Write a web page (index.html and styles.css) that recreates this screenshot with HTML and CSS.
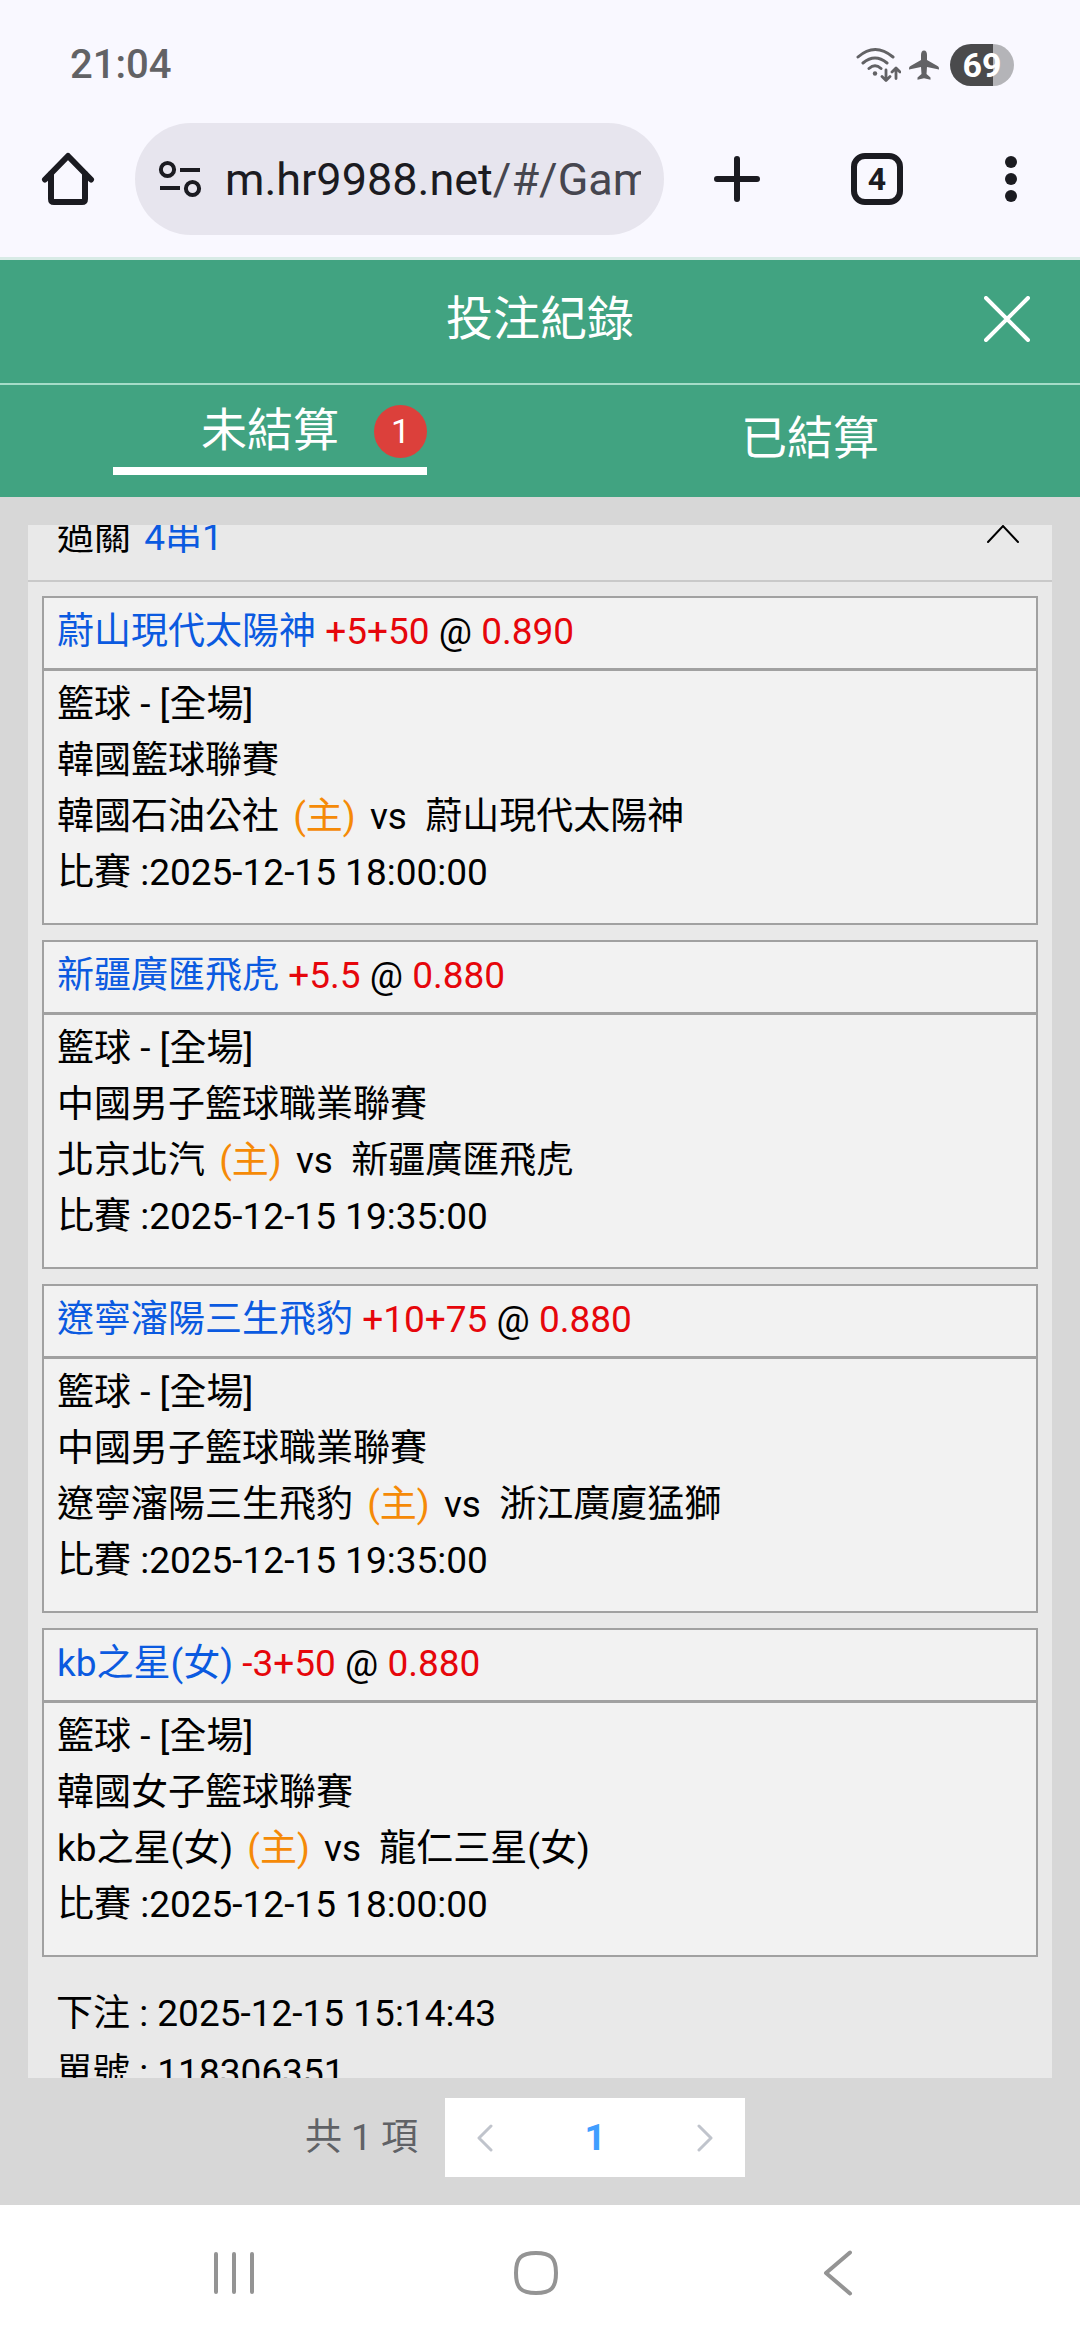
FILE: index.html
```html
<!DOCTYPE html>
<html lang="zh-Hant">
<head>
<meta charset="utf-8">
<meta name="viewport" content="width=device-width, initial-scale=1">
<title>投注紀錄</title>
<link rel="stylesheet" href="styles.css">
</head>
<body>
<div class="screen">
  <div class="browser">
    <div class="status">
      <span class="clock">21:04</span>
      <div class="status-icons">
        <svg class="wifi" width="46" height="36" viewBox="0 0 46 36" fill="none" stroke="#626265" stroke-width="3" stroke-linecap="round" stroke-linejoin="round">
          <path d="M3 10Q20 -5 38 10M8 16Q20 6 32 16M14 21.500Q20 16 26 21.500"/>
          <circle cx="20" cy="26.500" r="2.200" fill="#626265" stroke="none"/>
          <path d="M31 23v10M27 29.500l4 4 4-4M41 31.500v-10M37 25l4-4 4 4" stroke-width="2.800"/>
        </svg>
        <svg class="plane" width="30" height="30" viewBox="0 0 30 30" fill="#626265">
          <path d="M15 0.500c2 0 3 1.800 3 4.500v5l10.500 6c1 .6 1.500 1.200 1.500 3.500l-12-2.500-.5 7 4 3.500v2.200L15 28.300 8.500 29.700v-2.200l4-3.500-.5-7L0 19.500c0-2.300.5-2.900 1.500-3.500l10.500-6V5c0-2.700 1-4.500 3-4.500z"/>
        </svg>
        <span class="battery">69</span>
      </div>
    </div>
    <div class="toolbar">
      <button class="tool home" type="button" aria-label="Home">
        <svg width="54" height="54" viewBox="0 0 54 54" fill="none" stroke="#1b1b21" stroke-width="6" stroke-linecap="round" stroke-linejoin="round"><path d="M4 27.500L27 4l23 23.500"/><path d="M10 22v25q0 3 3 3h28q3 0 3-3V22"/></svg>
      </button>
      <button class="address" type="button">
        <svg class="tune" width="44" height="38" viewBox="0 0 44 38" fill="none" stroke="#1b1b21" stroke-width="4" stroke-linecap="butt"><circle cx="9.500" cy="9.500" r="6.600"/><path d="M22 10h20M2 28h20"/><circle cx="34.500" cy="28.500" r="6.600"/></svg>
        <span class="url">m.hr9988.net<span class="path">/#/Gam</span></span>
      </button>
      <button class="tool add" type="button" aria-label="New tab">
        <svg width="46" height="48" viewBox="0 0 46 48" fill="none" stroke="#1b1b21" stroke-width="6" stroke-linecap="round"><path d="M23 4v40M3 24h40"/></svg>
      </button>
      <button class="tool" type="button" aria-label="Tabs"><span class="tab-count">4</span></button>
      <button class="tool" type="button" aria-label="More">
        <svg width="12" height="48" viewBox="0 0 12 48" fill="#1b1b21"><circle cx="6" cy="7" r="6"/><circle cx="6" cy="24" r="6"/><circle cx="6" cy="41" r="6"/></svg>
      </button>
    </div>
  </div>

  <header class="titlebar">
    <h1>投注紀錄</h1>
    <button class="close" type="button" aria-label="關閉">
      <svg width="46" height="46" viewBox="0 0 46 46" fill="none" stroke="#fff" stroke-width="4" stroke-linecap="round"><path d="M2 2l42 42M44 2L2 44"/></svg>
    </button>
  </header>
  <nav class="tabs">
    <button class="tab" type="button"><span class="active">未結算<span class="badge">1</span></span></button>
    <button class="tab" type="button">已結算</button>
  </nav>

  <main class="body">
    <section class="scroller">
      <div class="slip">
        <div class="slip-head">
          <span>過關 <b class="combo">4串1</b></span>
          <button class="fold" type="button" aria-label="收合">
            <svg width="32" height="20" viewBox="0 0 32 20" fill="none" stroke="#000" stroke-width="2" stroke-linecap="round"><path d="M1 18L16 2l15 16"/></svg>
          </button>
        </div>
        <div class="bets">
          <article class="bet">
            <h2><span class="team">蔚山現代太陽神</span> <span class="red">+5+50</span> @ <span class="red">0.890</span></h2>
            <div class="info">
              <p>籃球 - [全場]</p>
              <p>韓國籃球聯賽</p>
              <p>韓國石油公社 <span class="host">(主)</span> vs&nbsp; 蔚山現代太陽神</p>
              <p>比賽 :2025-12-15 18:00:00</p>
            </div>
          </article>
          <article class="bet">
            <h2><span class="team">新疆廣匯飛虎</span> <span class="red">+5.5</span> @ <span class="red">0.880</span></h2>
            <div class="info">
              <p>籃球 - [全場]</p>
              <p>中國男子籃球職業聯賽</p>
              <p>北京北汽 <span class="host">(主)</span> vs&nbsp; 新疆廣匯飛虎</p>
              <p>比賽 :2025-12-15 19:35:00</p>
            </div>
          </article>
          <article class="bet">
            <h2><span class="team">遼寧瀋陽三生飛豹</span> <span class="red">+10+75</span> @ <span class="red">0.880</span></h2>
            <div class="info">
              <p>籃球 - [全場]</p>
              <p>中國男子籃球職業聯賽</p>
              <p>遼寧瀋陽三生飛豹 <span class="host">(主)</span> vs&nbsp; 浙江廣廈猛獅</p>
              <p>比賽 :2025-12-15 19:35:00</p>
            </div>
          </article>
          <article class="bet">
            <h2><span class="team">kb之星(女)</span> <span class="red">-3+50</span> @ <span class="red">0.880</span></h2>
            <div class="info">
              <p>籃球 - [全場]</p>
              <p>韓國女子籃球聯賽</p>
              <p>kb之星(女) <span class="host">(主)</span> vs&nbsp; 龍仁三星(女)</p>
              <p>比賽 :2025-12-15 18:00:00</p>
            </div>
          </article>
        </div>
        <div class="meta">
          <p>下注 : 2025-12-15 15:14:43</p>
          <p>單號 : 118306351</p>
        </div>
      </div>
    </section>
    <div class="pagination">
      <span class="total">共 1 項</span>
      <div class="pager">
        <button type="button" aria-label="上一頁"><svg width="16" height="28" viewBox="0 0 16 28" fill="none" stroke="#c0c4cc" stroke-width="3" stroke-linecap="round" stroke-linejoin="round"><path d="M14 2L2 14l12 12"/></svg></button>
        <button class="page" type="button">1</button>
        <button type="button" aria-label="下一頁"><svg width="16" height="28" viewBox="0 0 16 28" fill="none" stroke="#c0c4cc" stroke-width="3" stroke-linecap="round" stroke-linejoin="round"><path d="M2 2l12 12L2 26"/></svg></button>
      </div>
    </div>
  </main>

  <div class="sysnav">
    <button type="button" aria-label="Recents"><svg width="42" height="44" viewBox="0 0 42 44" fill="none" stroke="#949494" stroke-width="4" stroke-linecap="round"><path d="M3 3v38M21 3v38M39 3v38"/></svg></button>
    <button type="button" aria-label="Home"><svg width="46" height="46" viewBox="0 0 46 46" fill="none" stroke="#949494" stroke-width="4"><path d="M23 3C38 3 43 8 43 23S38 43 23 43 3 38 3 23 8 3 23 3z"/></svg></button>
    <button type="button" aria-label="Back"><svg width="30" height="46" viewBox="0 0 30 46" fill="none" stroke="#949494" stroke-width="4" stroke-linecap="round" stroke-linejoin="round"><path d="M27 2.500L3 23l24 20.500"/></svg></button>
  </div>
</div>
</body>
</html>
```
FILE: styles.css
```css
* {
  box-sizing: border-box;
}

body {
  margin: 0;
  background: #fff;
  color: #000;
  font-family: Roboto, "Noto Sans CJK TC", sans-serif;
  font-size: 37px;
}

h1, h2, p {
  margin: 0;
  font-weight: 400;
}

button {
  margin: 0;
  padding: 0;
  border: 0;
  background: none;
  color: inherit;
  font: inherit;
}

svg {
  display: block;
}

.screen {
  display: flex;
  flex-direction: column;
  height: 100vh;
}

/* Browser chrome */
.browser {
  flex: none;
  background: #f9f8ff;
  border-bottom: 3px solid #d8ebe6;
}

.status {
  display: flex;
  justify-content: space-between;
  align-items: center;
  padding: 41px 66px 34px 70px;
  line-height: 48px;
}

.clock {
  color: #626265;
  font-size: 40px;
  font-weight: 500;
}

.status-icons {
  display: flex;
  align-items: center;
}

.plane {
  margin: 0 11px 0 8px;
}

.battery {
  width: 64px;
  height: 42px;
  border-radius: 21px;
  background: linear-gradient(to right, #4a4a4c 67%, #b4b4b8 67%);
  color: #fff;
  font-size: 34px;
  font-weight: 700;
  line-height: 42px;
  text-align: center;
}

.toolbar {
  display: flex;
  align-items: center;
  padding: 0 2px 22px 0;
}

.tool {
  display: flex;
  justify-content: center;
  align-items: center;
  flex: none;
  width: 134px;
  height: 112px;
}

.tool.home {
  width: 135px;
}

.tool.add {
  width: 146px;
}

.address {
  display: flex;
  align-items: center;
  flex: 1;
  gap: 23px;
  min-width: 0;
  height: 112px;
  padding: 0 23px;
  border-radius: 56px;
  background: #e7e5ee;
  color: #1b1b21;
  font-size: 45px;
  text-align: left;
}

.tune {
  flex: none;
}

.url {
  flex: 1;
  overflow: hidden;
  white-space: nowrap;
}

.path {
  color: #46464f;
}

.tab-count {
  width: 52px;
  height: 52px;
  border: 6px solid #1b1b21;
  border-radius: 14px;
  color: #1b1b21;
  font-size: 32px;
  font-weight: 700;
  line-height: 40px;
}

/* Page header */
.titlebar {
  display: grid;
  grid-template-columns: 1fr auto 1fr;
  align-items: center;
  flex: none;
  padding: 24px 50px 29px;
  border-bottom: 2px solid #a5dcc8;
  background: #41a381;
  color: #fff;
}

.titlebar h1 {
  grid-column: 2;
  font-size: 47px;
  line-height: 70px;
}

.close {
  justify-self: end;
}

.tabs {
  display: flex;
  flex: none;
  background: #41a381;
  color: #fff;
  font-size: 46px;
}

.tab {
  flex: 1;
  height: 112px;
  padding-bottom: 6px;
  line-height: 70px;
}

.active {
  position: relative;
  display: block;
  width: 314px;
  margin: 0 auto 8px;
  padding: 2px 0;
  border-bottom: 8px solid #fff;
}

.badge {
  position: absolute;
  top: 12px;
  right: 0;
  width: 53px;
  height: 53px;
  border-radius: 50%;
  background: #dc403b;
  font-size: 34px;
  line-height: 53px;
}

/* Bet list */
.body {
  display: flex;
  flex-direction: column;
  flex: 1;
  min-height: 0;
  padding: 28px;
  background: #d7d7d7;
}

.scroller {
  flex: 1;
  min-height: 0;
  overflow: hidden;
  background: #e9e9e9;
}

/* The list is resting part-way down its scroll range */
.slip {
  margin-top: -31px;
}

.slip-head {
  display: flex;
  justify-content: space-between;
  align-items: center;
  padding: 14px 33px 12px 29px;
  border-bottom: 2px solid #c9c9c9;
  line-height: 60px;
}

.fold {
  padding-bottom: 8px;
}

.combo {
  margin-left: 4px;
  color: #0b5ae0;
  font-weight: 400;
}

.bets {
  display: grid;
  gap: 15px;
  padding: 14px 14px 27px;
}

.bet {
  border: 2px solid #a1a1a1;
  background: #f2f2f2;
}

.bet h2 {
  padding: 6px 13px 8px;
  border-bottom: 3px solid #a1a1a1;
  font-size: 37px;
  line-height: 56px;
}

.team {
  color: #0b5ae0;
}

.red {
  color: #e6060b;
}

.host {
  margin: 0 5px;
  color: #f58a07;
}

.info {
  padding: 6px 13px 22px;
  line-height: 56px;
}

.meta {
  padding: 0 28px;
  line-height: 59px;
}

.pagination {
  display: flex;
  justify-content: center;
  align-items: center;
  gap: 27px;
  flex: none;
  padding: 20px 30px 0 0;
  line-height: 48px;
}

.total {
  color: #606266;
}

.pager {
  display: flex;
  width: 300px;
  height: 79px;
  background: #fff;
}

.pager button {
  display: flex;
  justify-content: center;
  align-items: center;
  width: 80px;
}

.pager .page {
  flex: 1;
  color: #409eff;
  font-weight: 700;
}

/* System navigation */
.sysnav {
  display: flex;
  justify-content: center;
  gap: 2px;
  flex: none;
  padding-right: 8px;
  background: #fff;
}

.sysnav button {
  display: flex;
  justify-content: center;
  align-items: center;
  width: 28%;
  height: 135px;
}
```
